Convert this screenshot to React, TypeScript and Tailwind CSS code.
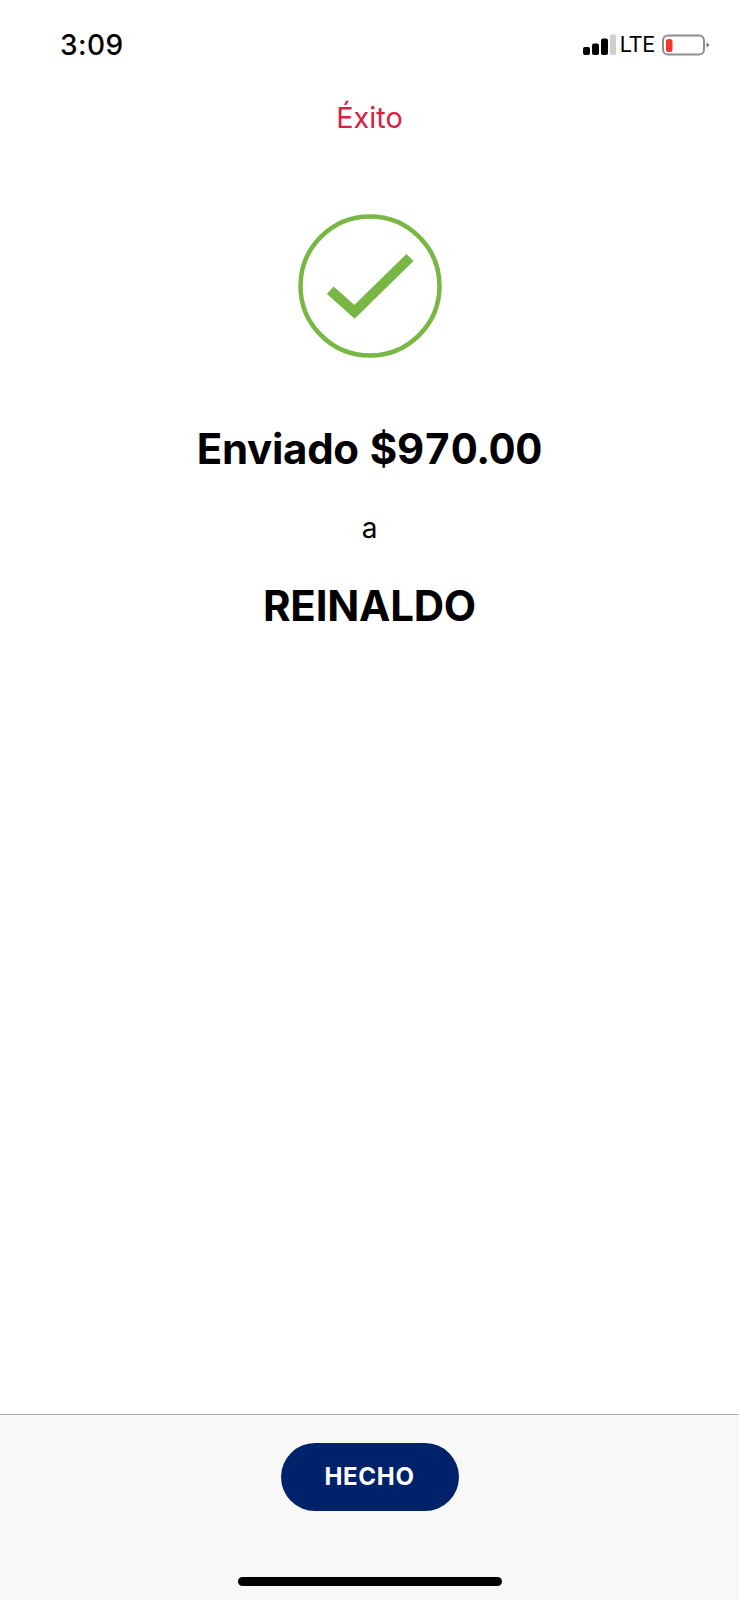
export default function App() {
  return (
    <div className="flex h-[1600px] w-[739px] flex-col bg-white font-['Inter',sans-serif] text-black">
      {/* Status bar */}
      <div className="flex h-[100px] shrink-0 items-start justify-between pl-[60px] pr-[29px] pt-[27px]">
        <span className="text-[28px] font-medium leading-[36px] tracking-[0.5px]">3:09</span>
        <div className="flex items-center pt-[6px]">
          <svg width="33" height="22" viewBox="0 0 33 22">
            <rect x="0" y="13" width="7" height="8" rx="2" fill="#000" />
            <rect x="9" y="9.5" width="7" height="11.5" rx="2" fill="#000" />
            <rect x="18" y="4.5" width="7" height="16.5" rx="2" fill="#000" />
            <rect x="27" y="0.5" width="6" height="20.5" rx="1.5" fill="#cfcfcf" />
          </svg>
          <span className="ml-[4px] font-['Roboto',sans-serif] text-[22px] leading-[24px] tracking-[0.2px]">LTE</span>
          <svg className="ml-[7px]" width="48" height="24" viewBox="0 0 48 24">
            <rect x="1" y="2.5" width="41" height="19" rx="5" fill="none" stroke="#8e8e8e" strokeWidth="2" />
            <rect x="4" y="6" width="6.5" height="13" rx="2.5" fill="#f0372e" />
            <path d="M44.5 9.5 L47.5 12 L44.5 14.5 Z" fill="#6e6e6e" />
          </svg>
        </div>
      </div>

      {/* Title */}
      <div className="text-center text-[28.8px] leading-[36px] text-[#d92040]">Éxito</div>

      {/* Success message */}
      <main className="flex flex-1 flex-col items-center pt-[77px]">
        <svg width="146" height="146" viewBox="0 0 146 146">
          <circle cx="73" cy="73" r="69.5" fill="none" stroke="#78b743" strokeWidth="4.5" />
          <path d="M33.3 77.3 L57.5 98.8 L113 44.5" fill="none" stroke="#78b743" strokeWidth="10" />
        </svg>
        <h1 className="mt-[65px] text-[42px] font-bold leading-[50px] tracking-[-0.3px] tabular-nums">Enviado $970.00</h1>
        <p className="mt-[37px] text-[28px] leading-[34px]">a</p>
        <h2 className="mt-[36px] text-[42px] font-bold leading-[50px] tracking-[-0.2px]">REINALDO</h2>
      </main>

      {/* Footer */}
      <footer className="relative flex h-[186px] shrink-0 justify-center border-t border-[#a8a8a8] bg-[#f8f8f7] pt-[28px]">
        <button className="h-[68px] w-[178px] rounded-[34px] bg-[#00226b] text-[24px] font-bold tracking-[0.7px] text-white">
          HECHO
        </button>
        <div className="absolute bottom-[14px] left-[238px] h-[9px] w-[264px] rounded-full bg-black" />
      </footer>
    </div>
  );
}
